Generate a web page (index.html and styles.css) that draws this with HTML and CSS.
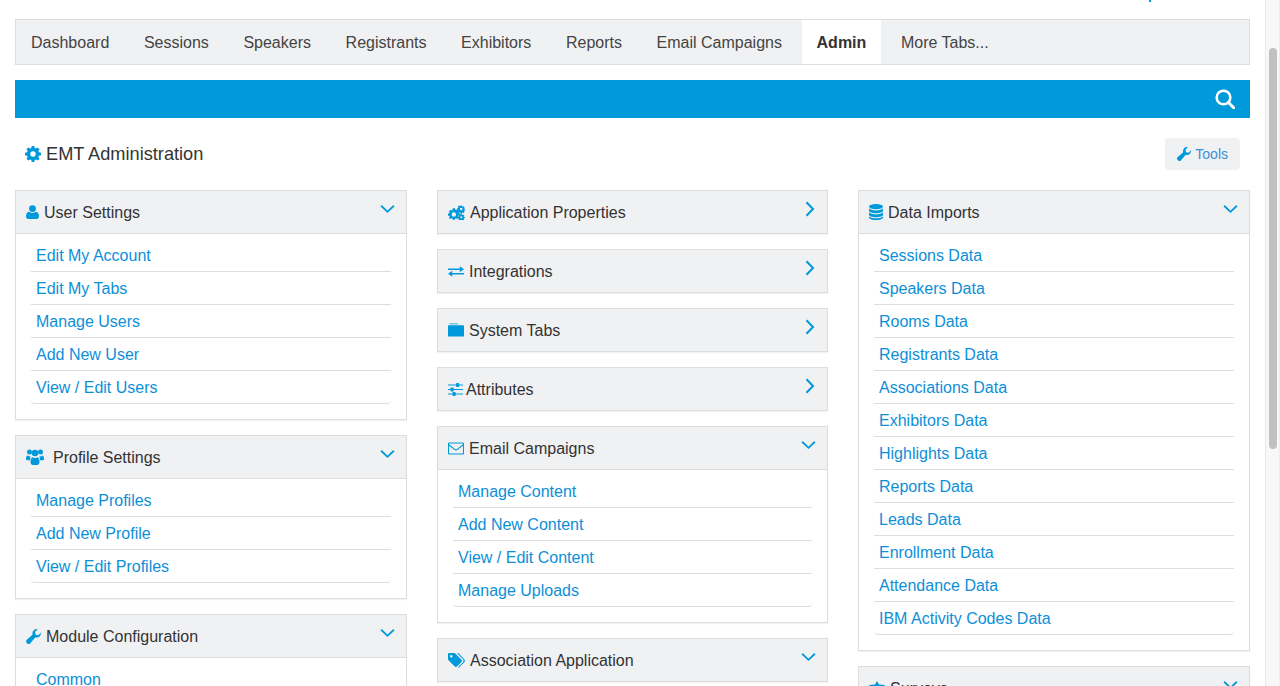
FILE: index.html
```html
<!DOCTYPE html>
<html lang="en">
<head>
    <meta charset="UTF-8">
    <title>EMT Administration</title>
    <link rel="stylesheet" href="styles.css">
</head>
<body>
    <svg class="icon-defs" width="0" height="0">
        <defs>
            <symbol id="i-gear" viewBox="0 0 16 16"><path fill-rule="evenodd" d="M6.7 0h2.6l.4 2.100 1.200.5L12.700 1.400l1.900 1.900-1.200 1.800.5 1.200 2.100.4v2.600l-2.100.4-.5 1.200 1.200 1.800-1.900 1.900-1.800-1.200-1.200.5-.4 2.100H6.700l-.4-2.100-1.200-.5-1.800 1.200-1.900-1.900 1.200-1.800-.5-1.200L0 9.300V6.700l2.100-.4.5-1.200L1.400 3.300l1.900-1.900 1.800 1.200 1.200-.5zM8 5.300a2.700 2.700 0 1 0 0 5.400 2.700 2.700 0 0 0 0-5.400z"/></symbol>
            <symbol id="i-user" viewBox="0 0 13 14"><circle cx="6.500" cy="3.600" r="3.400"/><path d="M0 11.500C0 8.800 1.200 7 3 6.800c.9.700 2.100 1.100 3.500 1.100S9.100 7.500 10 6.800c1.800.2 3 2 3 4.700 0 1.600-1 2.500-2.400 2.500H2.400C1 14 0 13.100 0 11.500z"/></symbol>
            <symbol id="i-users" viewBox="0 0 18 16"><circle cx="3.500" cy="3" r="2.500"/><circle cx="14.500" cy="3" r="2.500"/><circle cx="9" cy="4" r="3.300"/><path d="M0 10c0-2 .6-3.400 1.800-3.400.5.600 1.200.9 2.100.9.300 0 .6 0 .8-.1-.4.900-.7 2-.7 3.200v.6H1c-.7 0-1-.4-1-1.200zM18 10c0-2-.6-3.400-1.800-3.400-.5.600-1.200.9-2.100.9-.3 0-.6 0-.8-.1.4.900.7 2 .7 3.200v.6h3c.7 0 1-.4 1-1.200z"/><path d="M4.500 12.500c0-2.700 1-4.300 2.300-4.300.6.600 1.300.9 2.200.9s1.600-.3 2.200-.9c1.300 0 2.300 1.600 2.300 4.300 0 2.200-.9 3.500-2.200 3.500H6.700c-1.300 0-2.200-1.300-2.200-3.500z"/></symbol>
            <symbol id="i-wrench" viewBox="0 0 16 16"><path d="M15.800 3.600c.3 1.600-.1 3.200-1.300 4.300-1.200 1.100-2.900 1.500-4.400 1L4.300 15.400c-.8.800-2.100.8-2.900 0l-.8-.8c-.8-.8-.8-2.100 0-2.900l6.500-5.800c-.5-1.500-.1-3.200 1-4.400C9.300.3 10.900-.1 12.400.2L9.700 3l.6 3 3 .6z"/></symbol>
            <symbol id="i-gears" viewBox="0 0 18 15"><path fill-rule="evenodd" d="M5 3h2.400l.3 1.400.9.400 1.200-.8 1.600 1.600-.8 1.200.4.900 1.400.3v2.300l-1.400.3-.4.900.8 1.200-1.600 1.600-1.200-.8-.9.400-.3 1.300H5l-.3-1.300-.9-.4-1.200.8L1 13.200l.8-1.200-.4-.9L0 10.800V8.500l1.400-.3.4-.9L1 6.100l1.600-1.600 1.200.8.9-.4zM6.200 7.300a2.300 2.300 0 1 0 0 4.600 2.300 2.300 0 0 0 0-4.600z"/><path fill-rule="evenodd" d="M13.200 0h1.600l.2 1 .7.300.9-.5 1 1.100-.6.800.3.700 1 .2v1.500l-1 .2-.3.700.6.800-1 1.100-.9-.5-.7.300-.2 1h-1.600l-.2-1-.7-.3-.9.5-1-1.100.6-.8-.3-.7-1-.2V2.900l1-.2.3-.7-.6-.8 1-1.100.9.500.7-.3zM14 2.400a1.300 1.300 0 1 0 0 2.600 1.300 1.300 0 0 0 0-2.600z"/><path fill-rule="evenodd" d="M13.400 9h1.400l.2.800.6.300.7-.4.900 1-.5.700.3.600.8.2v1.300l-.8.200-.3.600.5.700-.9 1-.7-.4-.6.200-.2.700h-1.400l-.2-.7-.6-.2-.7.4-.9-1 .5-.7-.3-.6-.8-.2v-1.300l.8-.2.300-.6-.5-.7.900-1 .7.400.6-.3zM14.100 11.500a1.100 1.100 0 1 0 0 2.200 1.100 1.100 0 0 0 0-2.200z"/></symbol>
            <symbol id="i-exchange" viewBox="0 0 17 11"><path d="M0 2.300h12.500V0L17 3.200l-4.500 3.100V4H0zM17 7H4.500V4.700L0 7.900 4.500 11V8.700H17z"/></symbol>
            <symbol id="i-folder" viewBox="0 0 17 14"><path d="M1.500 0H10c.6 0 1 .4 1 1H1.500V0zM0 2h15.700c.7 0 1.300.5 1.300 1.200V14H0z"/></symbol>
            <symbol id="i-sliders" viewBox="0 0 15 13"><path d="M0 1.400h15v1.200H0zM0 5.900h15v1.200H0zM0 10.400h15v1.200H0z"/><rect x="8" y="0" width="3.200" height="4" rx=".8"/><rect x="2.500" y="4.500" width="3.200" height="4" rx=".8"/><rect x="4.500" y="9" width="3.200" height="4" rx=".8"/></symbol>
            <symbol id="i-mail" viewBox="0 0 17 13"><path fill="none" stroke="currentColor" stroke-width="1.200" d="M1.500.6h14a1 1 0 0 1 1 1v9.800a1 1 0 0 1-1 1h-14a1 1 0 0 1-1-1V1.600a1 1 0 0 1 1-1zM.8 2.500 7 7.400c.9.700 2.100.7 3 0l6.200-4.900"/></symbol>
            <symbol id="i-tags" viewBox="0 0 17 15"><path d="M0 1.200C0 .5.500 0 1.200 0H6c.5 0 1 .2 1.300.5l6.200 6.300c.6.600.6 1.500 0 2.100l-4.600 4.600c-.6.600-1.500.6-2.100 0L.5 7.300C.2 7 0 6.500 0 6zM3.300 2a1.300 1.300 0 1 0 0 2.600 1.300 1.300 0 0 0 0-2.600z" fill-rule="evenodd"/><path d="M9 0h.7c.5 0 1 .2 1.300.5l5.500 6.300c.6.600.6 1.500 0 2.100l-5 5.100c-.5.500-1 .6-1.700.4l5.100-5.200c.8-.9.800-2 0-2.900z"/></symbol>
            <symbol id="i-star" viewBox="0 0 16 15"><path d="M8 0l2 3.600 6 .4-4 4.800 1.100 6.200L8 12.300 3 15l1.100-6.200L0 4l6-.4z"/></symbol>
            <symbol id="i-down" viewBox="0 0 16 10"><path fill="none" stroke="currentColor" stroke-width="2" d="M1.200 1.500 8 8l6.800-6.500"/></symbol>
            <symbol id="i-right" viewBox="0 0 10 16"><path fill="none" stroke="currentColor" stroke-width="2" d="M1.500 1.200 8 8l-6.500 6.800"/></symbol>
        </defs>
    </svg>

    <div class="page">
        <main class="content">
            <div class="top-sliver"><span></span></div>

            <nav class="tabs">
                <a class="tab" href="#">Dashboard</a>
                <a class="tab" href="#">Sessions</a>
                <a class="tab" href="#">Speakers</a>
                <a class="tab" href="#">Registrants</a>
                <a class="tab" href="#">Exhibitors</a>
                <a class="tab" href="#">Reports</a>
                <a class="tab" href="#">Email Campaigns</a>
                <a class="tab active" href="#">Admin</a>
                <a class="tab" href="#">More Tabs...</a>
            </nav>

            <div class="search-bar">
                <svg class="search-icon" viewBox="0 0 20 20"><circle cx="8.500" cy="8.500" r="6.800" fill="none" stroke="#fff" stroke-width="2.600"/><path d="M13.500 13.500 19 19" stroke="#fff" stroke-width="3" stroke-linecap="round"/></svg>
            </div>

            <div class="title-row">
                <h1><svg class="title-icon"><use href="#i-gear"/></svg>EMT Administration</h1>
                <a class="tools-btn" href="#"><svg class="tools-icon"><use href="#i-wrench"/></svg>Tools</a>
            </div>

            <div class="columns">
                <div class="col">
                    <section class="panel">
                        <header class="panel-head">
                            <svg class="ico ico-user"><use href="#i-user"/></svg>
                            <span class="name">User Settings</span>
                            <svg class="arrow-down"><use href="#i-down"/></svg>
                        </header>
                        <ul class="links">
                            <li><a href="#">Edit My Account</a></li>
                            <li><a href="#">Edit My Tabs</a></li>
                            <li><a href="#">Manage Users</a></li>
                            <li><a href="#">Add New User</a></li>
                            <li><a href="#">View / Edit Users</a></li>
                        </ul>
                    </section>
                    <section class="panel">
                        <header class="panel-head">
                            <svg class="ico ico-users"><use href="#i-users"/></svg>
                            <span class="name">Profile Settings</span>
                            <svg class="arrow-down"><use href="#i-down"/></svg>
                        </header>
                        <ul class="links">
                            <li><a href="#">Manage Profiles</a></li>
                            <li><a href="#">Add New Profile</a></li>
                            <li><a href="#">View / Edit Profiles</a></li>
                        </ul>
                    </section>
                    <section class="panel">
                        <header class="panel-head">
                            <svg class="ico ico-wrench"><use href="#i-wrench"/></svg>
                            <span class="name">Module Configuration</span>
                            <svg class="arrow-down"><use href="#i-down"/></svg>
                        </header>
                        <ul class="links">
                            <li><a href="#">Common</a></li>
                        </ul>
                    </section>
                </div>

                <div class="col">
                    <section class="panel">
                        <header class="panel-head">
                            <svg class="ico ico-gears"><use href="#i-gears"/></svg>
                            <span class="name">Application Properties</span>
                            <svg class="arrow-right"><use href="#i-right"/></svg>
                        </header>
                    </section>
                    <section class="panel">
                        <header class="panel-head">
                            <svg class="ico ico-exchange"><use href="#i-exchange"/></svg>
                            <span class="name">Integrations</span>
                            <svg class="arrow-right"><use href="#i-right"/></svg>
                        </header>
                    </section>
                    <section class="panel">
                        <header class="panel-head">
                            <svg class="ico ico-folder"><use href="#i-folder"/></svg>
                            <span class="name">System Tabs</span>
                            <svg class="arrow-right"><use href="#i-right"/></svg>
                        </header>
                    </section>
                    <section class="panel">
                        <header class="panel-head">
                            <svg class="ico ico-sliders"><use href="#i-sliders"/></svg>
                            <span class="name">Attributes</span>
                            <svg class="arrow-right"><use href="#i-right"/></svg>
                        </header>
                    </section>
                    <section class="panel">
                        <header class="panel-head">
                            <svg class="ico ico-mail"><use href="#i-mail"/></svg>
                            <span class="name">Email Campaigns</span>
                            <svg class="arrow-down"><use href="#i-down"/></svg>
                        </header>
                        <ul class="links">
                            <li><a href="#">Manage Content</a></li>
                            <li><a href="#">Add New Content</a></li>
                            <li><a href="#">View / Edit Content</a></li>
                            <li><a href="#">Manage Uploads</a></li>
                        </ul>
                    </section>
                    <section class="panel">
                        <header class="panel-head">
                            <svg class="ico ico-tags"><use href="#i-tags"/></svg>
                            <span class="name">Association Application</span>
                            <svg class="arrow-down"><use href="#i-down"/></svg>
                        </header>
                    </section>
                </div>

                <div class="col">
                    <section class="panel">
                        <header class="panel-head">
                            <svg class="ico ico-db" viewBox="0 0 14 16"><ellipse cx="7" cy="2.600" rx="7" ry="2.600"/><path d="M0 4.300c1 1.400 3.900 2.100 7 2.100s6-.7 7-2.100v2.400c0 1.400-3.100 2.500-7 2.500S0 8.100 0 6.700zM0 8.300c1 1.400 3.900 2.100 7 2.100s6-.7 7-2.100v2.400c0 1.400-3.100 2.500-7 2.500S0 12.100 0 10.700z"/><path d="M0 12.200c1 1.400 3.900 2.100 7 2.100s6-.7 7-2.100v1.200C14 14.900 10.900 16 7 16s-7-1.100-7-2.600z"/></svg>
                            <span class="name">Data Imports</span>
                            <svg class="arrow-down"><use href="#i-down"/></svg>
                        </header>
                        <ul class="links">
                            <li><a href="#">Sessions Data</a></li>
                            <li><a href="#">Speakers Data</a></li>
                            <li><a href="#">Rooms Data</a></li>
                            <li><a href="#">Registrants Data</a></li>
                            <li><a href="#">Associations Data</a></li>
                            <li><a href="#">Exhibitors Data</a></li>
                            <li><a href="#">Highlights Data</a></li>
                            <li><a href="#">Reports Data</a></li>
                            <li><a href="#">Leads Data</a></li>
                            <li><a href="#">Enrollment Data</a></li>
                            <li><a href="#">Attendance Data</a></li>
                            <li><a href="#">IBM Activity Codes Data</a></li>
                        </ul>
                    </section>
                    <section class="panel">
                        <header class="panel-head">
                            <svg class="ico ico-star"><use href="#i-star"/></svg>
                            <span class="name">Surveys</span>
                            <svg class="arrow-down"><use href="#i-down"/></svg>
                        </header>
                    </section>
                </div>
            </div>
        </main>

        <aside class="scrollbar"><div class="thumb"></div></aside>
    </div>
</body>
</html>
```

FILE: styles.css
```css
html, body {
    height: 100%;
    margin: 0;
    overflow: hidden;
}
body {
    font-family: "Liberation Sans", Arial, sans-serif;
    font-size: 16px;
    color: #333;
    background: #fff;
}
a {
    text-decoration: none;
}
.icon-defs {
    display: block;
    height: 0;
}
.page {
    display: flex;
    height: 686px;
    overflow: hidden;
}
.content {
    width: 1235px;
    margin-left: 15px;
    flex: none;
}
.top-sliver {
    height: 19px;
    position: relative;
}
.top-sliver span {
    position: absolute;
    left: 1134px;
    top: 0;
    width: 2px;
    height: 2px;
    background: #0099da;
}

/* tabs */
.tabs {
    display: flex;
    height: 46px;
    box-sizing: border-box;
    background: #f0f1f3;
    border: 1px solid #ddd;
}
.tab {
    display: block;
    padding: 0 15px;
    margin-right: 4.6px;
    line-height: 46px;
    color: #444;
}
.tab.active {
    background: #fff;
    font-weight: bold;
    color: #333;
}

/* blue search strip */
.search-bar {
    display: flex;
    justify-content: flex-end;
    align-items: center;
    height: 38px;
    margin-top: 15px;
    padding-right: 15px;
    background: #0099da;
}
.search-icon {
    width: 20px;
    height: 20px;
}

/* heading row */
.title-row {
    display: flex;
    justify-content: space-between;
    align-items: center;
    height: 32px;
    margin-top: 20px;
    margin-bottom: 20px;
    padding: 0 10px;
}
h1 {
    display: flex;
    align-items: center;
    margin: 0;
    font-size: 18.2px;
    font-weight: normal;
    color: #333;
}
.title-icon {
    width: 16px;
    height: 16px;
    margin-right: 5px;
    fill: #0099da;
}
.tools-btn {
    display: flex;
    align-items: center;
    height: 32px;
    padding: 0 12px;
    box-sizing: border-box;
    font-size: 14px;
    color: #3b8fd4;
    background: #f0f1f3;
    border-radius: 4px;
}
.tools-icon {
    width: 14px;
    height: 14px;
    margin-right: 4px;
    fill: #0099da;
}

/* panels */
.columns {
    display: grid;
    grid-template-columns: 392px 391px 392px;
    column-gap: 30px;
}
.panel {
    margin-bottom: 15px;
    border: 1px solid #ddd;
    box-shadow: 0 1px 1px rgba(0, 0, 0, 0.05);
}
.panel-head {
    display: flex;
    align-items: center;
    height: 42px;
    padding: 0 10px;
    background: #f0f1f3;
    font-size: 16px;
    color: #333;
}
.panel > .links {
    border-top: 1px solid #ddd;
}
.ico {
    flex: none;
    margin-right: 5px;
    fill: #0099da;
    color: #0099da;
}
.ico-user { width: 13px; height: 14px; }
.ico-users { width: 18px; height: 16px; margin-right: 9px; }
.ico-wrench { width: 15px; height: 15px; }
.ico-gears { width: 17px; height: 15px; }
.ico-exchange { width: 16px; height: 11px; }
.ico-folder { width: 16px; height: 14px; }
.ico-sliders { width: 15px; height: 13px; margin-right: 3px; }
.ico-mail { width: 16px; height: 13px; }
.ico-tags { width: 17px; height: 15px; }
.ico-db { width: 14px; height: 16px; }
.ico-star { width: 16px; height: 15px; }
.name {
    flex: 1;
    padding-top: 2px;
}
.arrow-down {
    flex: none;
    width: 15px;
    height: 10px;
    margin-bottom: 6px;
    margin-right: 1px;
    color: #0099da;
}
.arrow-right {
    flex: none;
    width: 10px;
    height: 16px;
    margin-bottom: 6px;
    margin-right: 2px;
    color: #0099da;
}
.links {
    list-style: none;
    margin: 0;
    padding: 5px 15px 15px;
}
.links li {
    height: 33px;
    box-sizing: border-box;
    padding-left: 5px;
    border-bottom: 1px solid #ddd;
    line-height: 34px;
}
.links li:last-child {
    border-radius: 0 0 4px 4px;
}
.links a {
    color: #0d8fd8;
}

/* fake window scrollbar */
.scrollbar {
    flex: none;
    width: 15px;
    margin-left: 15px;
    background: #f8f8f8;
    border-left: 1px solid #e8e8e8;
    border-right: 1px solid #eee;
    box-sizing: border-box;
}
.thumb {
    width: 8px;
    height: 401px;
    margin: 48px 0 0 3px;
    background: #c1c1c1;
    border-radius: 4px;
}
```
